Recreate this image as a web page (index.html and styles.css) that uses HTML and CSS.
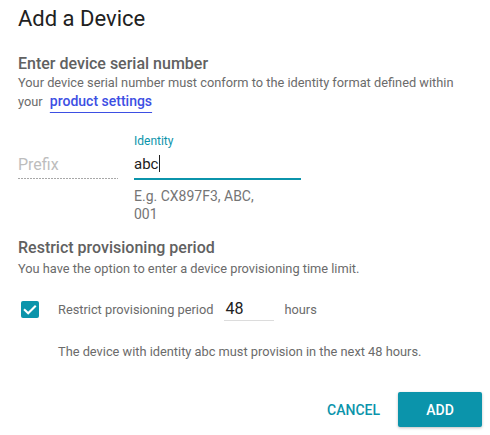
FILE: index.html
```html
<!DOCTYPE html>
<html>
<head>
<meta charset="utf-8">
<link rel="stylesheet" href="styles.css">
</head>
<body>
<div class="dialog">
  <h1 class="title">Add a Device</h1>

  <h2 class="heading">Enter device serial number</h2>
  <p class="body">Your device serial number must conform to the identity format defined within<br>your <a class="link" href="#">product settings</a></p>

  <div class="fields">
    <div class="prefix-col">
      <div class="prefix">Prefix</div>
    </div>
    <div class="identity-col">
      <div class="label">Identity</div>
      <div class="value">abc<span class="caret"></span></div>
      <div class="hint">E.g. CX897F3, ABC, 001</div>
    </div>
  </div>

  <h2 class="heading heading-2">Restrict provisioning period</h2>
  <p class="body body-2">You have the option to enter a device provisioning time limit.</p>

  <div class="restrict-row">
    <span class="checkbox">
      <svg width="18" height="17" viewBox="0 0 18 17"><path d="M3.8 8.9 L7.2 12.2 L14 5.4" fill="none" stroke="#fff" stroke-width="2.1" stroke-linecap="square"/></svg>
    </span>
    <span class="row-text">Restrict provisioning period</span>
    <span class="hours-input">48</span>
    <span class="row-text hours">hours</span>
  </div>

  <p class="summary">The device with identity abc must provision in the next 48 hours.</p>

  <div class="actions">
    <button class="btn btn-flat">CANCEL</button>
    <button class="btn btn-raised">ADD</button>
  </div>
</div>
</body>
</html>
```

FILE: styles.css
```css
* { box-sizing: border-box; }
html, body { margin: 0; padding: 0; background: #fff; }
body { font-family: Roboto, "Liberation Sans", sans-serif; width: 490px; height: 435px; overflow: hidden; }

.dialog { padding: 5px 8px 0 18px; }

.title {
  margin: 0;
  font-size: 22px;
  line-height: 28px;
  font-weight: 400;
  color: #212121;
}

.heading {
  margin: 22px 0 0;
  font-size: 16px;
  line-height: 18px;
  font-weight: 500;
  color: #616161;
}

.body {
  margin: 0;
  font-size: 12.8px;
  line-height: 19px;
  color: #6b6b6b;
}

.link {
  margin-left: 4px;
  font-size: 14px;
  color: #3d4fe3;
  font-weight: 500;
  text-decoration: underline;
  text-decoration-thickness: 1px;
  text-underline-offset: 6px;
}

.fields {
  display: flex;
  gap: 16px;
  margin-top: 22px;
}

.prefix-col { width: 100px; padding-top: 16px; }
.prefix {
  height: 30px;
  padding-top: 1px;
  font-size: 16px;
  line-height: 29px;
  color: #bdbdbd;
  background-image: linear-gradient(to right, #a8a8a8 0 2px, transparent 2px 3px);
  background-size: 3px 1px;
  background-repeat: repeat-x;
  background-position: 0 29px;
  background-origin: border-box;
}

.identity-col { width: 167px; }
.label {
  font-size: 12px;
  line-height: 16px;
  color: #0b94ab;
}
.value {
  height: 31px;
  padding-top: 2px;
  font-size: 15px;
  line-height: 27px;
  color: #212121;
  border-bottom: 2px solid #0b94ab;
}
.caret {
  display: inline-block;
  width: 1px;
  height: 17px;
  margin-left: 1px;
  background: #212121;
  vertical-align: -3px;
}
.hint {
  margin-top: 7px;
  width: 130px;
  font-size: 14px;
  line-height: 18px;
  color: #757575;
}

.heading-2 { margin-top: 16px; }
.body-2 { margin-top: 2px; }

.restrict-row {
  display: flex;
  align-items: center;
  margin-top: 19px;
  height: 24px;
}
.checkbox {
  width: 18px;
  height: 17px;
  margin-left: 3px;
  margin-right: 19px;
  border-radius: 2px;
  background: #0b94ab;
  display: flex;
  align-items: center;
  justify-content: center;
}
.checkbox svg { display: block; }
.row-text {
  font-size: 12.8px;
  line-height: 19px;
  color: #6b6b6b;
}
.hours-input {
  width: 50px;
  height: 24px;
  margin-left: 11px;
  font-size: 16px;
  line-height: 23px;
  color: #212121;
  border-bottom: 1px solid #dcdcdc;
  padding-left: 1px;
}
.hours { margin-left: 10px; }

.summary {
  margin: 21px 0 0 40px;
  font-size: 12.8px;
  line-height: 19px;
  color: #6b6b6b;
}

.actions {
  display: flex;
  justify-content: flex-end;
  gap: 2px;
  margin-top: 31px;
}
.btn {
  min-width: 84px;
  height: 35px;
  border: none;
  border-radius: 2px;
  font-family: Roboto, "Liberation Sans", sans-serif;
  font-size: 14px;
  font-weight: 500;
  cursor: pointer;
  padding: 0 16px;
}
.btn-flat { background: transparent; color: #0b94ab; }
.btn-raised {
  background: #0b94ab;
  color: #fff;
  box-shadow: 0 1px 3px rgba(0,0,0,0.25);
}
```
